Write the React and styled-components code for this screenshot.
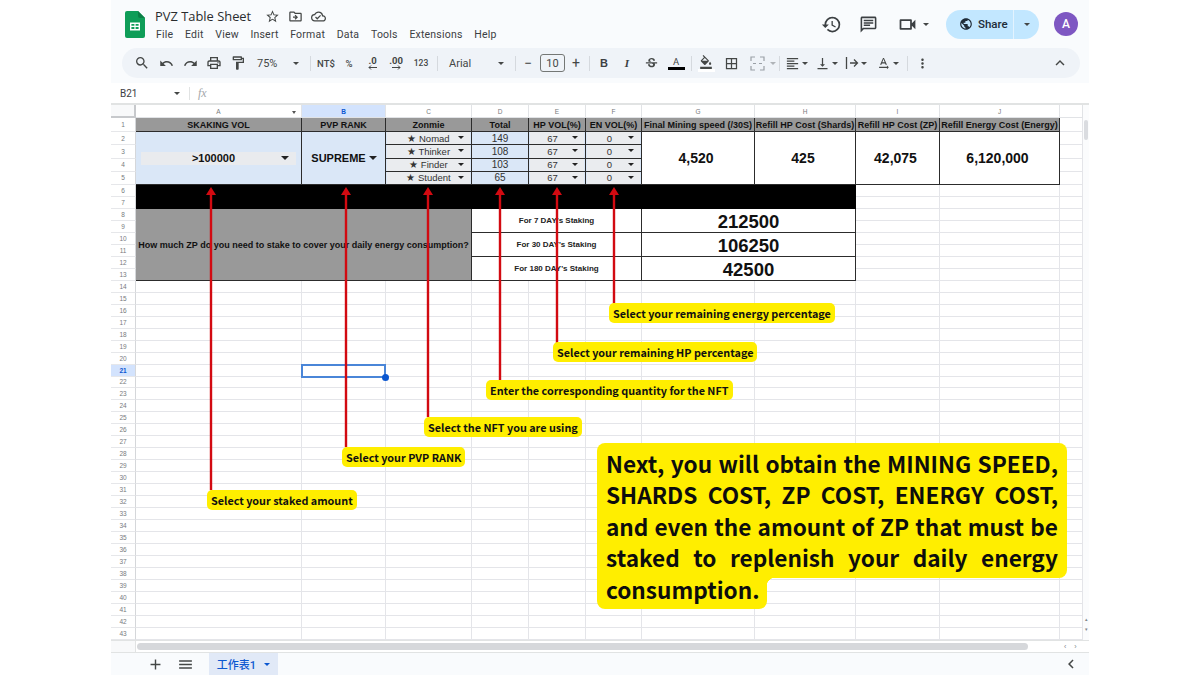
import styled, { createGlobalStyle } from "styled-components";
import {
  MdAdd,
  MdBorderAll,
  MdChevronLeft,
  MdFormatAlignLeft,
  MdHistory,
  MdKeyboardArrowUp,
  MdMenu,
  MdMoreVert,
  MdOutlineChat,
  MdOutlineCloudDone,
  MdOutlineDriveFileMove,
  MdOutlineFormatColorFill,
  MdOutlineFormatPaint,
  MdOutlinePrint,
  MdOutlineVideocam,
  MdPublic,
  MdRedo,
  MdSearch,
  MdStarBorder,
  MdStrikethroughS,
  MdTextRotationNone,
  MdUndo,
  MdVerticalAlignBottom,
} from "react-icons/md";

const COLUMN_WIDTHS = [166, 84, 86, 57, 57, 56, 113, 101, 84, 120, 23];
const COLUMN_LETTERS = ["A", "B", "C", "D", "E", "F", "G", "H", "I", "J", ""];
const ROW_COUNT = 43;
const MENU = ["File", "Edit", "View", "Insert", "Format", "Data", "Tools", "Extensions", "Help"];

const HEADERS = [
  "SKAKING VOL",
  "PVP RANK",
  "Zonmie",
  "Total",
  "HP VOL(%)",
  "EN VOL(%)",
  "Final Mining speed (/30S)",
  "Refill HP Cost (Shards)",
  "Refill HP Cost (ZP)",
  "Refill Energy Cost (Energy)",
];

const NFT_ROWS = [
  { name: "Nomad", total: 149 },
  { name: "Thinker", total: 108 },
  { name: "Finder", total: 103 },
  { name: "Student", total: 65 },
];

const RESULTS = ["4,520", "425", "42,075", "6,120,000"];

const STAKING = [
  { label: "For 7 DAY's Staking", value: "212500" },
  { label: "For 30 DAY's Staking", value: "106250" },
  { label: "For 180 DAY's Staking", value: "42500" },
];

const ARROWS = [
  { x: 211, bottom: 490 },
  { x: 346, bottom: 447 },
  { x: 428, bottom: 417 },
  { x: 500, bottom: 380 },
  { x: 557, bottom: 343 },
  { x: 614, bottom: 303 },
];

const NOTES = [
  { x: 207, y: 490, text: "Select your staked amount" },
  { x: 342, y: 447, text: "Select your PVP RANK" },
  { x: 424, y: 417, text: "Select the NFT you are using" },
  { x: 486, y: 380, text: "Enter the corresponding quantity for the NFT" },
  { x: 553, y: 342, text: "Select your remaining HP percentage" },
  { x: 609, y: 303, text: "Select your remaining energy percentage" },
];

// cells that the filled table at the top already covers
function isCovered(col, row) {
  if (row >= 1 && row <= 5 && col <= 10) return true;
  if (row >= 6 && row <= 13 && col <= 8) return true;
  if (row === 21 && col === 2) return true;
  return false;
}

function SheetsLogo() {
  return (
    <svg width="20" height="27" viewBox="0 0 20 27">
      <path d="M2 0h11l7 7v18a2 2 0 0 1-2 2H2a2 2 0 0 1-2-2V2a2 2 0 0 1 2-2z" fill="#0f9d58" />
      <path d="M13 0l7 7h-5a2 2 0 0 1-2-2z" fill="#0b7f46" />
      <path d="M5 11.5h10v8H5zM6.4 12.9v1.9h3v-1.9zM10.6 12.9v1.9h3v-1.9zM6.4 16.1v2h3v-2zM10.6 16.1v2h3v-2z" fill="#fff" fillRule="evenodd" />
    </svg>
  );
}

function MergeIcon() {
  return (
    <svg width="15" height="15" viewBox="0 0 15 15" fill="none" stroke="#9aa0a6" strokeWidth="1.2">
      <path d="M1 5V1h4M10 1h4v4M1 10v4h4M10 14h4v-4M3 7.5h3M12 7.5H9" />
    </svg>
  );
}

function WrapIcon() {
  return (
    <svg width="14" height="14" viewBox="0 0 14 14" fill="none" stroke="#444746" strokeWidth="1.3">
      <path d="M1.5 1v12M5 7h7.5M9 3.5L12.5 7 9 10.5" />
    </svg>
  );
}

function SmallArrow({ flip }) {
  return (
    <svg width="9" height="5" viewBox="0 0 9 5" fill="none" stroke="#444746" strokeWidth="1">
      {flip ? <path d="M0 2.5h8M6 .5l2 2-2 2" /> : <path d="M9 2.5H1M3 .5l-2 2 2 2" />}
    </svg>
  );
}

function Arrow({ x, bottom }) {
  const top = 187;
  const height = bottom - top;
  return (
    <ArrowSvg $x={x - 6} $y={top} width="12" height={height} viewBox={`0 0 12 ${height}`}>
      <path d={`M6 0L11 8H7.2V${height}H4.8V8H1z`} fill="#d20a11" />
    </ArrowSvg>
  );
}

export default function App() {
  const filler = [];
  for (let row = 1; row <= ROW_COUNT; row++) {
    for (let col = 1; col <= COLUMN_WIDTHS.length; col++) {
      if (!isCovered(col, row)) filler.push(<EmptyCell key={`${col}-${row}`} $c={col + 1} $r={row + 1} />);
    }
  }

  return (
    <Page>
      <GlobalStyle />
      <Window>
        <Chrome>
          <TopBar>
            <SheetsLogo />
            <TitleBlock>
              <TitleRow>
                <Title>PVZ Table Sheet</Title>
                <MdStarBorder size={15} />
                <MdOutlineDriveFileMove size={15} />
                <MdOutlineCloudDone size={15} />
              </TitleRow>
              <MenuRow>
                {MENU.map((item) => (
                  <span key={item}>{item}</span>
                ))}
              </MenuRow>
            </TitleBlock>
            <TopActions>
              <HeadIcon $w={36}>
                <MdHistory size={21} />
              </HeadIcon>
              <HeadIcon $w={36}>
                <MdOutlineChat size={19} />
              </HeadIcon>
              <HeadIcon $w={52}>
                <MdOutlineVideocam size={21} />
                <Caret $gap={5} />
              </HeadIcon>
              <ShareButton>
                <ShareMain>
                  <MdPublic size={14} />
                  Share
                </ShareMain>
                <ShareDrop>
                  <Caret />
                </ShareDrop>
              </ShareButton>
              <Avatar>A</Avatar>
            </TopActions>
          </TopBar>

          <Toolbar>
            <Tool $w={25}><MdSearch size={16} /></Tool>
            <Tool $w={25}><MdUndo size={15} /></Tool>
            <Tool $w={23}><MdRedo size={15} /></Tool>
            <Tool $w={24}><MdOutlinePrint size={16} /></Tool>
            <Tool $w={24}><MdOutlineFormatPaint size={16} /></Tool>
            <SelectTool $w={56} $left={7}>
              75%
              <Caret />
            </SelectTool>
            <Sep $w={9} />
            <TextTool $w={22}>NT$</TextTool>
            <TextTool $w={24}>%</TextTool>
            <DecimalTool $w={23}>
              .0
              <SmallArrow />
            </DecimalTool>
            <DecimalTool $w={24}>
              .00
              <SmallArrow flip />
            </DecimalTool>
            <TextTool $w={26} $size={8.5}>123</TextTool>
            <Sep $w={7} />
            <SelectTool $w={70} $left={8}>
              Arial
              <Caret />
            </SelectTool>
            <Sep $w={8} />
            <Tool $w={18}>−</Tool>
            <SizeBox>10</SizeBox>
            <Tool $w={18}>+</Tool>
            <Sep $w={8} />
            <LetterTool $w={22}>B</LetterTool>
            <LetterTool $w={24} $italic>I</LetterTool>
            <Tool $w={24}><MdStrikethroughS size={15} /></Tool>
            <Tool $w={26}>
              <ColorA>A</ColorA>
            </Tool>
            <Sep $w={4} />
            <Tool $w={26}>
              <FillIcon>
                <MdOutlineFormatColorFill size={14} />
              </FillIcon>
            </Tool>
            <Tool $w={25}><MdBorderAll size={15} /></Tool>
            <Tool $w={26}><MergeIcon /></Tool>
            <Tool $w={6}><Caret $muted /></Tool>
            <Sep $w={6} />
            <IconCaret $w={30}>
              <MdFormatAlignLeft size={15} />
              <Caret />
            </IconCaret>
            <IconCaret $w={30}>
              <MdVerticalAlignBottom size={15} />
              <Caret />
            </IconCaret>
            <IconCaret $w={31}>
              <WrapIcon />
              <Caret />
            </IconCaret>
            <IconCaret $w={31}>
              <MdTextRotationNone size={15} />
              <Caret />
            </IconCaret>
            <Sep $w={6} />
            <Tool $w={24}><MdMoreVert size={15} /></Tool>
            <CollapseTool><MdKeyboardArrowUp size={18} /></CollapseTool>
          </Toolbar>
        </Chrome>

        <FormulaBar>
          <NameBox>
            B21
            <Caret />
          </NameBox>
          <FormulaSep />
          <FxLabel>fx</FxLabel>
        </FormulaBar>

        <SheetArea>
          <Grid>
            <Corner />
            {COLUMN_LETTERS.map((letter, i) => (
              <ColumnHead key={i} $c={i + 2} $active={letter === "B"}>
                {letter}
                {letter === "A" && <HeadCaret />}
              </ColumnHead>
            ))}
            {Array.from({ length: ROW_COUNT }, (_, i) => (
              <RowHead key={i} $r={i + 2} $active={i + 1 === 21}>
                {i + 1}
              </RowHead>
            ))}

            {filler}

            {HEADERS.map((text, i) => (
              <HeadCell key={text} $c={i + 2} $r={2}>
                {text}
              </HeadCell>
            ))}
            <EmptyCell $c={12} $r={2} />

            <InputCell $c={2} $r={3} $rs={4}>
              <BigChip $pr={10}>
                &gt;100000
                <ChipCaret $right={7} />
              </BigChip>
            </InputCell>
            <InputCell $c={3} $r={3} $rs={4}>
              <PlainPick>
                SUPREME
                <ChipCaret $right={8} />
              </PlainPick>
            </InputCell>

            {NFT_ROWS.map((nft, i) => (
              <NftRow key={nft.name} nft={nft} row={i + 3} />
            ))}

            {RESULTS.map((value, i) => (
              <ResultCell key={value} $c={i + 8} $r={3} $rs={4}>
                {value}
              </ResultCell>
            ))}
            <EmptyCell $c={12} $r={3} />
            <EmptyCell $c={12} $r={4} />
            <EmptyCell $c={12} $r={5} />
            <EmptyCell $c={12} $r={6} />

            <BlackBand $c={2} $r={7} $cs={8} $rs={2} />
            <QuestionCell $c={2} $r={9} $cs={3} $rs={6}>
              How much ZP do you need to stake to cover your daily energy consumption?
            </QuestionCell>
            {STAKING.map((item, i) => (
              <StakingRow key={item.label} item={item} row={9 + i * 2} />
            ))}

            <SelectedCell $c={3} $r={22} />
          </Grid>
          <VScroll>
            <VThumb />
            <VArrows>
              <span>▴</span>
              <span>▾</span>
            </VArrows>
          </VScroll>
        </SheetArea>

        <HScrollRow>
          <HCorner />
          <HThumb />
          <HArrows>
            <span>‹</span>
            <span>›</span>
          </HArrows>
        </HScrollRow>

        <BottomBar>
          <BottomIcon $ml={33}><MdAdd size={17} /></BottomIcon>
          <BottomIcon $ml={8}><MdMenu size={17} /></BottomIcon>
          <SheetTab>
            工作表1
            <Caret $blue />
          </SheetTab>
          <TabsCollapse><MdChevronLeft size={18} /></TabsCollapse>
        </BottomBar>
      </Window>

      {ARROWS.map((arrow) => (
        <Arrow key={arrow.x} x={arrow.x} bottom={arrow.bottom} />
      ))}
      {NOTES.map((note) => (
        <Note key={note.text} $x={note.x} $y={note.y}>
          {note.text}
        </Note>
      ))}

      <Callout>
        <CalloutBody>
          <CalloutLine>Next, you will obtain the MINING SPEED,</CalloutLine>
          <CalloutLine>SHARDS COST, ZP COST, ENERGY COST,</CalloutLine>
          <CalloutLine>and even the amount of ZP that must be</CalloutLine>
          <CalloutLine>staked to replenish your daily energy</CalloutLine>
        </CalloutBody>
        <CalloutTail>consumption.</CalloutTail>
      </Callout>
    </Page>
  );
}

function NftRow({ nft, row }) {
  return (
    <>
      <ChipCell $c={4} $r={row}>
        <SmallChip $pr={0}>
          ★ {nft.name}
          <ChipCaret $right={6} $small />
        </SmallChip>
      </ChipCell>
      <InputCell $c={5} $r={row}>
        <NumberText>{nft.total}</NumberText>
      </InputCell>
      <ChipCell $c={6} $r={row}>
        <SmallChip $pr={9}>
          67
          <ChipCaret $right={6} $small />
        </SmallChip>
      </ChipCell>
      <ChipCell $c={7} $r={row}>
        <SmallChip $pr={8}>
          0
          <ChipCaret $right={6} $small />
        </SmallChip>
      </ChipCell>
    </>
  );
}

function StakingRow({ item, row }) {
  return (
    <>
      <StakingLabel $c={5} $r={row} $cs={3} $rs={2}>
        {item.label}
      </StakingLabel>
      <StakingValue $c={8} $r={row} $cs={2} $rs={2}>
        {item.value}
      </StakingValue>
    </>
  );
}

const GlobalStyle = createGlobalStyle`
  html, body {
    margin: 0;
    padding: 0;
    height: 100%;
    overflow: hidden;
    background: #ffffff;
  }
  * {
    box-sizing: border-box;
  }
`;

const Page = styled.div`
  position: relative;
  width: 1200px;
  height: 675px;
  background: #ffffff;
  overflow: hidden;
  font-family: "Liberation Sans", Arial, sans-serif;
`;

const Window = styled.div`
  width: 978px;
  height: 675px;
  margin-left: 111px;
  display: flex;
  flex-direction: column;
  background: #ffffff;
`;

const Chrome = styled.div`
  height: 83px;
  flex-shrink: 0;
  background: #f9fbfd;
`;

const TopBar = styled.div`
  height: 48px;
  display: flex;
  align-items: center;
  padding: 0 11px 0 14px;
  color: #444746;
`;

const TitleBlock = styled.div`
  margin-left: 10px;
  margin-top: -2px;
  display: flex;
  flex-direction: column;
`;

const TitleRow = styled.div`
  display: flex;
  align-items: center;
  gap: 8px;
  height: 20px;
  padding-top: 1px;

  svg:first-of-type {
    margin-left: 6px;
  }
`;

const Title = styled.div`
  font-family: "Open Sans", sans-serif;
  font-size: 12.9px;
  color: #2a2c2e;
`;

const MenuRow = styled.div`
  display: flex;
  gap: 11.7px;
  margin-top: 2px;
  margin-left: 1px;
  font-family: "Roboto", sans-serif;
  font-size: 10.5px;
  letter-spacing: 0.2px;
  color: #3c4043;
`;

const TopActions = styled.div`
  margin-left: auto;
  display: flex;
  align-items: center;
`;

const HeadIcon = styled.div`
  width: ${(p) => p.$w}px;
  display: flex;
  align-items: center;
  justify-content: center;
  color: #3c4043;
  margin-left: 1px;
`;

const ShareButton = styled.div`
  width: 93px;
  height: 29px;
  margin-left: 7px;
  border-radius: 15px;
  background: #c2e7ff;
  display: flex;
  overflow: hidden;
`;

const ShareMain = styled.div`
  width: 68px;
  display: flex;
  align-items: center;
  gap: 5px;
  padding-left: 13px;
  border-right: 1px solid #e3f3ff;
  font-family: "Roboto", sans-serif;
  font-size: 11.5px;
  font-weight: 500;
  color: #202c38;
`;

const ShareDrop = styled.div`
  flex: 1;
  display: flex;
  align-items: center;
  justify-content: center;
`;

const Avatar = styled.div`
  width: 24px;
  height: 24px;
  margin-left: 15px;
  border-radius: 50%;
  background: #7e57c2;
  color: #ffffff;
  font-family: "Roboto", sans-serif;
  font-size: 12px;
  font-weight: 500;
  display: flex;
  align-items: center;
  justify-content: center;
`;

const Caret = styled.span`
  display: inline-block;
  width: 0;
  height: 0;
  margin-left: ${(p) => p.$gap || 0}px;
  border-left: 3px solid transparent;
  border-right: 3px solid transparent;
  border-top: 3px solid ${(p) => (p.$blue ? "#0b57d0" : p.$muted ? "#b0b4b8" : "#444746")};
`;

const Toolbar = styled.div`
  width: 958px;
  height: 30px;
  margin-left: 11px;
  padding-left: 7px;
  border-radius: 15px;
  background: #eff3f8;
  display: flex;
  align-items: center;
  color: #444746;
`;

const Tool = styled.div`
  width: ${(p) => p.$w}px;
  flex-shrink: 0;
  display: flex;
  align-items: center;
  justify-content: center;
  font-family: "Roboto", sans-serif;
  font-size: 14px;
`;

const TextTool = styled(Tool)`
  font-size: ${(p) => p.$size || 9.5}px;
  font-weight: 500;
`;

const LetterTool = styled(Tool)`
  font-family: ${(p) => (p.$italic ? '"Liberation Serif", serif' : '"Liberation Sans", sans-serif')};
  font-style: ${(p) => (p.$italic ? "italic" : "normal")};
  font-size: 11px;
  font-weight: 700;
  color: #3c4043;
`;

const DecimalTool = styled(Tool)`
  flex-direction: column;
  font-size: 9.5px;
  font-weight: 700;
  line-height: 8px;
`;

const SelectTool = styled.div`
  width: ${(p) => p.$w}px;
  flex-shrink: 0;
  display: flex;
  align-items: center;
  justify-content: space-between;
  padding: 0 7px 0 ${(p) => p.$left}px;
  font-family: "Roboto", sans-serif;
  font-size: 11px;
`;

const IconCaret = styled.div`
  width: ${(p) => p.$w}px;
  flex-shrink: 0;
  display: flex;
  align-items: center;
  gap: 2px;
  padding-left: 3px;
`;

const Sep = styled.div`
  width: ${(p) => p.$w}px;
  height: 15px;
  flex-shrink: 0;
  display: flex;
  justify-content: center;

  &::before {
    content: "";
    width: 1px;
    background: #d5d9de;
  }
`;

const SizeBox = styled.div`
  width: 25px;
  height: 18px;
  margin: 0 2px 0 3px;
  flex-shrink: 0;
  border: 1px solid #747775;
  border-radius: 3px;
  display: flex;
  align-items: center;
  justify-content: center;
  font-family: "Roboto", sans-serif;
  font-size: 11px;
`;

const ColorA = styled.span`
  display: block;
  width: 17px;
  text-align: center;
  border-bottom: 3px solid #000000;
  font-family: "Roboto", sans-serif;
  font-size: 9.5px;
  line-height: 11px;
`;

const FillIcon = styled.span`
  display: flex;
  width: 17px;
  justify-content: center;
  border-bottom: 3px solid #ffffff;
  height: 17px;
`;

const CollapseTool = styled.div`
  margin-left: auto;
  margin-right: 11px;
  display: flex;
`;

const FormulaBar = styled.div`
  height: 22px;
  flex-shrink: 0;
  display: flex;
  align-items: center;
  padding-left: 9px;
  background: #ffffff;
  border-bottom: 2px solid #e1e3e3;
`;

const NameBox = styled.div`
  width: 60px;
  display: flex;
  align-items: center;
  justify-content: space-between;
  font-family: "Roboto", sans-serif;
  font-size: 10px;
  color: #3c4043;
`;

const FormulaSep = styled.div`
  width: 1px;
  height: 13px;
  margin-left: 9px;
  background: #e1e3e3;
`;

const FxLabel = styled.div`
  margin-left: 8px;
  font-family: "Liberation Serif", serif;
  font-size: 12px;
  font-style: italic;
  color: #a4a7aa;
`;

const SheetArea = styled.div`
  flex: 1;
  min-height: 0;
  display: flex;
`;

const Grid = styled.div`
  width: 972px;
  display: grid;
  grid-template-columns: 25px ${COLUMN_WIDTHS.map((w) => `${w}px`).join(" ")};
  grid-template-rows: 13px 14px repeat(4, 13.25px) repeat(38, 11.97px);
`;

const Placed = styled.div`
  grid-column: ${(p) => p.$c} / span ${(p) => p.$cs || 1};
  grid-row: ${(p) => p.$r} / span ${(p) => p.$rs || 1};
  min-width: 0;
  min-height: 0;
`;

const Corner = styled.div`
  grid-column: 1;
  grid-row: 1;
  background: #f8f9fa;
  border-right: 2px solid #c7c9cc;
  border-bottom: 2px solid #c7c9cc;
`;

const ColumnHead = styled.div`
  position: relative;
  grid-column: ${(p) => p.$c};
  grid-row: 1;
  display: flex;
  align-items: center;
  justify-content: center;
  background: ${(p) => (p.$active ? "#d3e3fd" : "#ffffff")};
  border-right: 1px solid #e1e3e6;
  border-bottom: 1px solid #e1e3e6;
  font-size: 6.5px;
  font-weight: ${(p) => (p.$active ? 700 : 400)};
  color: ${(p) => (p.$active ? "#0b57d0" : "#777a7d")};
`;

const HeadCaret = styled.span`
  position: absolute;
  right: 5px;
  top: 6px;
  border-left: 2.5px solid transparent;
  border-right: 2.5px solid transparent;
  border-top: 3px solid #555555;
`;

const RowHead = styled.div`
  grid-column: 1;
  grid-row: ${(p) => p.$r};
  display: flex;
  align-items: center;
  justify-content: center;
  background: ${(p) => (p.$active ? "#d3e3fd" : "#ffffff")};
  border-right: 1px solid #d5d7da;
  border-bottom: 1px solid #e6e7ea;
  font-size: 6.5px;
  font-weight: ${(p) => (p.$active ? 700 : 400)};
  color: ${(p) => (p.$active ? "#0b57d0" : "#777a7d")};
`;

const EmptyCell = styled(Placed)`
  border-right: 1px solid #e4e5e9;
  border-bottom: 1px solid #e4e5e9;
`;

const TableCell = styled(Placed)`
  display: flex;
  align-items: center;
  justify-content: center;
  border-right: 1px solid #2c2c2c;
  border-bottom: 1px solid #2c2c2c;
  color: #111111;
  white-space: nowrap;
`;

const HeadCell = styled(TableCell)`
  background: #999999;
  font-size: 9px;
  font-weight: 700;
`;

const InputCell = styled(TableCell)`
  background: #dae7f7;
`;

const ChipCell = styled(TableCell)`
  background: #dae7f7;
  padding: 0 1px;
`;

const BigChip = styled.div`
  position: relative;
  width: 155px;
  height: 13px;
  padding-right: ${(p) => p.$pr}px;
  background: #e9ebee;
  display: flex;
  align-items: center;
  justify-content: center;
  font-size: 11px;
  font-weight: 700;
`;

const PlainPick = styled.div`
  position: relative;
  width: 100%;
  padding-right: 10px;
  text-align: center;
  font-size: 11px;
  font-weight: 700;
`;

const SmallChip = styled.div`
  position: relative;
  width: 100%;
  height: 100%;
  padding-right: ${(p) => p.$pr}px;
  background: #eaecef;
  display: flex;
  align-items: center;
  justify-content: center;
  font-size: 9.5px;
  color: #333333;
`;

const ChipCaret = styled.span`
  position: absolute;
  right: ${(p) => p.$right}px;
  top: 50%;
  margin-top: -2px;
  border-left: ${(p) => (p.$small ? 3 : 4)}px solid transparent;
  border-right: ${(p) => (p.$small ? 3 : 4)}px solid transparent;
  border-top: ${(p) => (p.$small ? 3 : 4)}px solid #222222;
`;

const NumberText = styled.span`
  font-size: 10px;
  color: #333333;
`;

const ResultCell = styled(TableCell)`
  padding-right: 4px;
  background: #ffffff;
  font-size: 14px;
  font-weight: 700;
`;

const BlackBand = styled(Placed)`
  background: #000000;
`;

const QuestionCell = styled(TableCell)`
  padding-top: 2px;
  background: #999999;
  font-size: 9px;
  font-weight: 700;
`;

const StakingLabel = styled(TableCell)`
  padding-top: 1px;
  background: #ffffff;
  font-size: 8px;
  font-weight: 700;
  color: #222222;
`;

const StakingValue = styled(TableCell)`
  padding-top: 3px;
  background: #ffffff;
  font-size: 18.5px;
  font-weight: 700;
`;

const SelectedCell = styled(Placed)`
  position: relative;
  margin: -1px 0 -1px -1px;
  border: 2px solid #4a86d8;

  &::after {
    content: "";
    position: absolute;
    right: -5px;
    bottom: -5px;
    width: 7px;
    height: 7px;
    border-radius: 50%;
    background: #0b57d0;
  }
`;

const VScroll = styled.div`
  width: 6px;
  display: flex;
  flex-direction: column;
  align-items: center;
  background: #fbfcfd;
`;

const VThumb = styled.div`
  width: 4px;
  height: 20px;
  margin-top: 15px;
  border-radius: 2px;
  background: #dadce0;
`;

const VArrows = styled.div`
  margin-top: auto;
  margin-bottom: 8px;
  display: flex;
  flex-direction: column;
  gap: 4px;
  font-size: 5px;
  color: #80868b;
`;

const HScrollRow = styled.div`
  height: 12px;
  flex-shrink: 0;
  display: flex;
  align-items: center;
  border-top: 1px solid #e1e3e3;
  background: #ffffff;
`;

const HCorner = styled.div`
  width: 25px;
  height: 100%;
  background: #f8f9fa;
  border-right: 1px solid #e1e3e3;
`;

const HThumb = styled.div`
  width: 891px;
  height: 7px;
  margin-left: 1px;
  border-radius: 4px;
  background: #d6d8db;
`;

const HArrows = styled.div`
  margin-left: 36px;
  display: flex;
  gap: 8px;
  font-size: 7px;
  color: #80868b;
`;

const BottomBar = styled.div`
  height: 23px;
  flex-shrink: 0;
  display: flex;
  align-items: stretch;
  background: #f9fbfd;
  border-top: 1px solid #e1e3e3;
  color: #444746;
`;

const BottomIcon = styled.div`
  width: 22px;
  margin-left: ${(p) => p.$ml}px;
  display: flex;
  align-items: center;
  justify-content: center;
`;

const SheetTab = styled.div`
  width: 69px;
  margin-left: 13px;
  display: flex;
  align-items: center;
  justify-content: center;
  gap: 8px;
  background: #e1e9f7;
  color: #0b57d0;
  font-family: "Roboto", "Noto Sans CJK TC", sans-serif;
  font-size: 11px;
  font-weight: 500;
`;

const TabsCollapse = styled.div`
  margin-left: auto;
  margin-right: 9px;
  display: flex;
  align-items: center;
`;

const ArrowSvg = styled.svg`
  position: absolute;
  left: ${(p) => p.$x}px;
  top: ${(p) => p.$y}px;
`;

const Note = styled.div`
  position: absolute;
  left: ${(p) => p.$x}px;
  top: ${(p) => p.$y}px;
  height: 20px;
  padding: 0 4px 1px;
  display: flex;
  align-items: center;
  border-radius: 5px;
  background: #ffee00;
  font-family: "Noto Sans CJK SC", "Noto Sans", sans-serif;
  font-size: 10.8px;
  font-weight: 700;
  color: #111111;
  white-space: nowrap;
`;

const Callout = styled.div`
  position: absolute;
  left: 597px;
  top: 443px;
  width: 470px;
  font-family: "Noto Sans CJK SC", "Noto Sans", sans-serif;
  font-size: 22.6px;
  font-weight: 700;
  line-height: 31.3px;
  color: #0d0d0d;
`;

const CalloutBody = styled.div`
  padding: 5px 9px 5px;
  border-radius: 8px 8px 8px 0;
  background: #ffee00;
`;

const CalloutLine = styled.div`
  text-align: justify;
  text-align-last: justify;
`;

const CalloutTail = styled.div`
  position: relative;
  width: 170px;
  height: 31px;
  padding-left: 9px;
  line-height: 23px;
  border-radius: 0 0 8px 8px;
  background: #ffee00;
  white-space: nowrap;

  &::after {
    content: "";
    position: absolute;
    top: 0;
    right: -8px;
    width: 8px;
    height: 8px;
    background: radial-gradient(circle at 100% 100%, transparent 8px, #ffee00 8.5px);
  }
`;
